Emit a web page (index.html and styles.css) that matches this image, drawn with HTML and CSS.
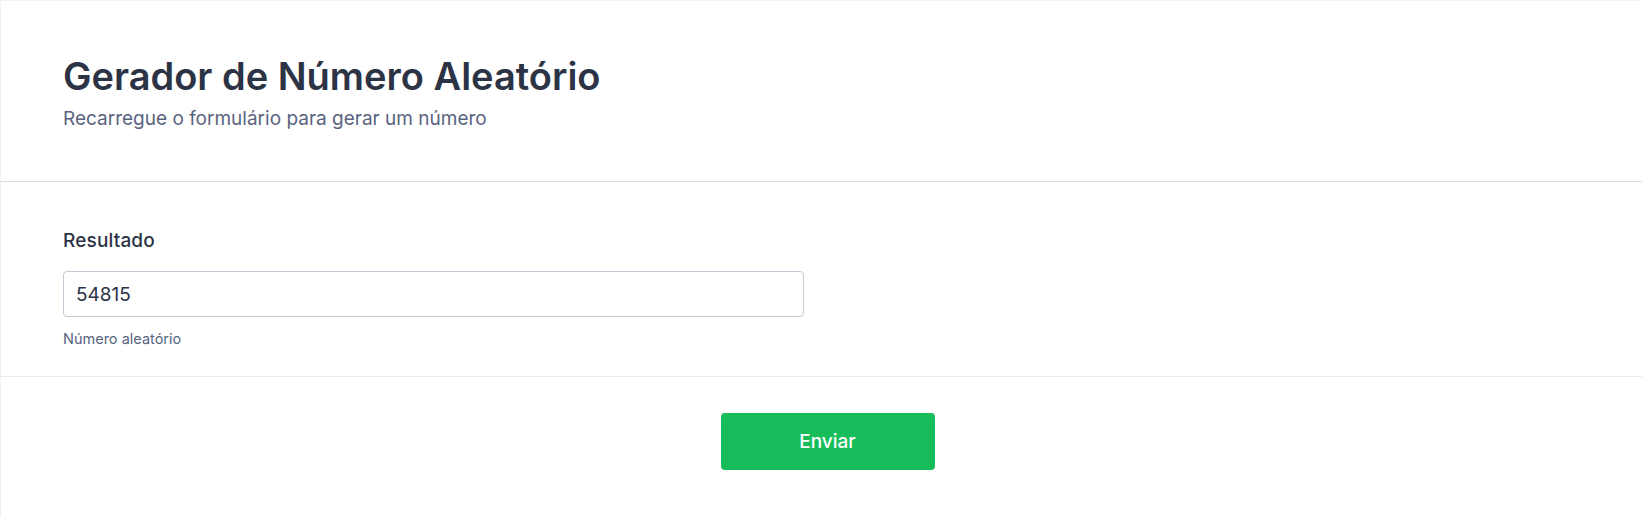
FILE: index.html
```html
<!DOCTYPE html>
<html lang="pt">
<head>
<meta charset="utf-8">
<title>Gerador de Número Aleatório</title>
<link rel="stylesheet" href="styles.css">
</head>
<body>
<form class="form">
  <header class="form-header">
    <h1 class="title">Gerador de Número Aleatório</h1>
    <p class="subtitle">Recarregue o formulário para gerar um número</p>
  </header>
  <section class="field">
    <label class="label" for="res">Resultado</label>
    <input class="input" id="res" type="text" value="54815">
    <span class="helper">Número aleatório</span>
  </section>
  <div class="actions">
    <button class="submit" type="button">Enviar</button>
  </div>
</form>
</body>
</html>
```
FILE: styles.css
```css
html, body {
  margin: 0;
  padding: 0;
  background: #ffffff;
}
body {
  font-family: Inter, "Noto Sans", sans-serif;
  color: #2c3345;
}
.form {
  border-left: 1px solid #f0f1f5;
  border-top: 1px solid #f0f1f5;
  min-height: 516px;
  display: flex;
  flex-direction: column;
}
.form-header {
  padding: 52px 62px 49px;
  border-bottom: 1px solid #d8dae4;
}
.title {
  margin: 0;
  font-size: 38px;
  line-height: 46px;
  font-weight: 600;
  color: #2c3345;
}
.subtitle {
  margin: 7px 0 0;
  font-size: 19px;
  line-height: 26px;
  color: #5a6480;
}
.field {
  padding: 48px 62px 29px;
  border-bottom: 1px solid #eaebf2;
  display: flex;
  flex-direction: column;
  align-items: flex-start;
}
.label {
  font-size: 19px;
  line-height: 22px;
  font-weight: 500;
  letter-spacing: 0.15px;
  color: #2c3345;
}
.input {
  margin-top: 19px;
  box-sizing: border-box;
  width: 741px;
  height: 46px;
  border: 1px solid #c3cad8;
  border-radius: 4px;
  padding: 0 12px;
  font-family: inherit;
  font-size: 19px;
  color: #2c3345;
  background: #fff;
}
.helper {
  margin-top: 13px;
  font-size: 14.5px;
  line-height: 17px;
  color: #57647e;
}
.actions {
  display: flex;
  justify-content: center;
  padding: 36px 0 47px 12px;
}
.submit {
  width: 214px;
  height: 57px;
  border: none;
  border-radius: 4px;
  background: #18bd5b;
  color: #ffffff;
  font-family: inherit;
  font-size: 19px;
  font-weight: 500;
}
```
